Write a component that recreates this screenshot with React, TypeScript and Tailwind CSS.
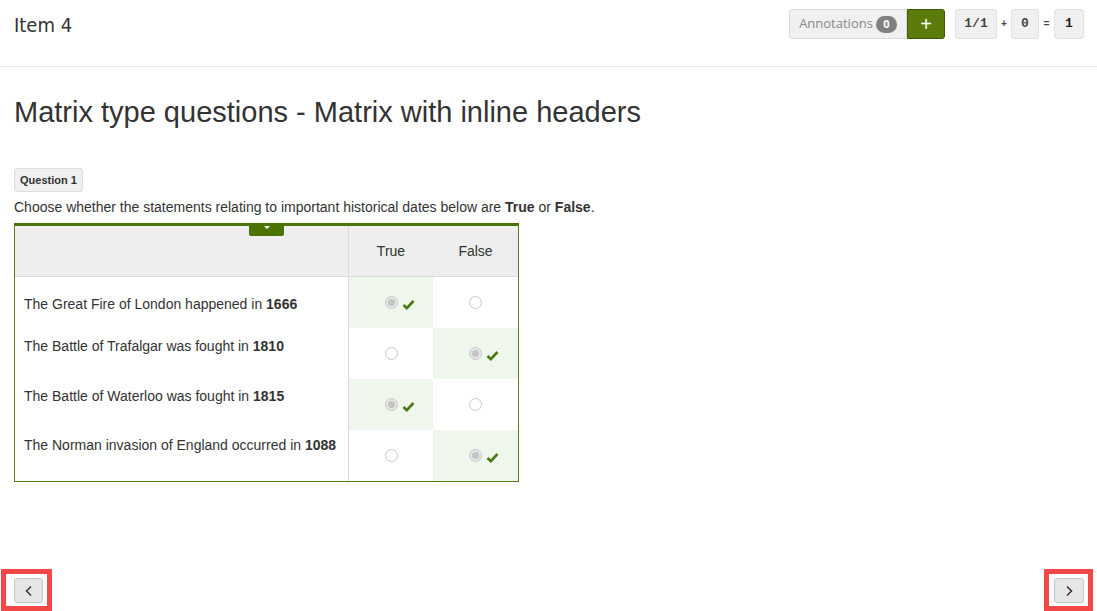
import React from "react";

const rows = [
  { text: "The Great Fire of London happened in ", year: "1666", answer: 0, pt: "pt-[17px]" },
  { text: "The Battle of Trafalgar was fought in ", year: "1810", answer: 1, pt: "pt-[8px]" },
  { text: "The Battle of Waterloo was fought in ", year: "1815", answer: 0, pt: "pt-[7px]" },
  { text: "The Norman invasion of England occurred in ", year: "1088", answer: 1, pt: "pt-[5px]" },
];

function Check() {
  return (
    <svg width="13" height="11" viewBox="0 0 13 11" className="absolute left-[11px] top-[0px]">
      <path d="M1.5 6 L4.8 9.2 L11.5 2" fill="none" stroke="#4a7a12" strokeWidth="2.6" />
    </svg>
  );
}

function Radio({ checked }: { checked: boolean }) {
  return (
    <span className="relative inline-block w-[13px] h-[13px]">
      <span
        className={
          "block w-[13px] h-[13px] rounded-full border border-[#c8c8c8] " +
          (checked ? "bg-[#e6e6e6]" : "bg-white")
        }
      >
        {checked && <span className="block w-[7px] h-[7px] rounded-full bg-[#c4c4c4] m-[2px]" />}
      </span>
      {checked && (
        <span className="absolute left-[6px] top-[3px]">
          <Check />
        </span>
      )}
    </span>
  );
}

export default function App() {
  return (
    <div className="w-[1097px] h-[611px] bg-white relative overflow-hidden" style={{ fontFamily: "'Liberation Sans', Arial, sans-serif" }}>
      <div className="h-[67px] border-b border-[#e6e6e6] flex items-start justify-between pl-[14px] pr-[13px]">
        <div className="pt-[10px] text-[20px] text-[#333] font-['DejaVu_Sans_Condensed',sans-serif]">Item 4</div>
        <div className="flex items-center pt-[9px]">
          <div className="flex h-[30px]">
            <div className="w-[118px] flex items-center justify-center gap-[3px] bg-[#f0f0f0] border border-[#d9d9d9] rounded-l-[3px] text-[#888] text-[13px] font-['Open_Sans',sans-serif]">
              Annotations
              <span className="inline-flex items-center justify-center w-[21px] h-[17px] rounded-full bg-[#808080] text-white text-[11px] font-bold">0</span>
            </div>
            <div className="w-[38px] flex items-center justify-center bg-[#5b7c0b] border border-[#3f5a05] rounded-r-[3px] text-white text-[20px] leading-none">+</div>
          </div>
          <div className="ml-[10px] flex items-center font-['Liberation_Mono',monospace] text-[13px] font-bold text-[#444]">
            <span className="w-[42px] h-[30px] flex items-center justify-center bg-[#f0f0f0] border border-[#e2e2e2] rounded-[3px]">1/1</span>
            <span className="w-[14px] text-center text-[10px]">+</span>
            <span className="w-[28px] h-[30px] flex items-center justify-center bg-[#f0f0f0] border border-[#e2e2e2] rounded-[3px]">0</span>
            <span className="w-[15px] text-center text-[10px]">=</span>
            <span className="w-[30px] h-[30px] flex items-center justify-center bg-[#f0f0f0] border border-[#e2e2e2] rounded-[3px] text-[#222]">1</span>
          </div>
        </div>
      </div>

      <div className="px-[14px]">
        <h1 className="mt-[29px] text-[29px] text-[#333] leading-[33px]">Matrix type questions - Matrix with inline headers</h1>

        <div className="mt-[39px] inline-block px-[5px] h-[24px] leading-[22px] bg-[#f0f0f0] border border-[#ddd] rounded-[3px] text-[11px] font-bold text-[#333]">
          Question 1
        </div>
        <p className="mt-[7px] text-[14px] text-[#333] leading-[16px]">
          Choose whether the statements relating to important historical dates below are <b>True</b> or <b>False</b>.
        </p>

        <div className="mt-[8px] w-[505px] border-x border-b border-[#577d1b] border-t-[3px] border-t-[#4a7300]">
          <div className="flex h-[51px] bg-[#eeeeee] border-b border-[#dadada] relative">
            <div className="absolute left-[234px] top-0 w-[35px] h-[10px] bg-[#4a7300] rounded-b-[2px] flex justify-center">
              <span className="block w-0 h-0 border-x-[3px] border-x-transparent border-t-[3px] border-t-white" />
            </div>
            <div className="w-[334px] border-r border-[#dadada]" />
            <div className="w-[84px] flex items-center justify-center text-[14px] text-[#333]">True</div>
            <div className="flex-1 flex items-center justify-center text-[14px] text-[#333]">False</div>
          </div>
          {rows.map((r, i) => (
            <div key={i} className="flex h-[51px]">
              <div className={"w-[334px] border-r border-[#dadada] pl-[9px] text-[14px] text-[#333] " + r.pt}>
                {r.text}
                <b>{r.year}</b>
              </div>
              {[0, 1].map((c) => (
                <div
                  key={c}
                  className={
                    (c === 0 ? "w-[84px] " : "flex-1 ") +
                    "flex items-center justify-center " +
                    (r.answer === c ? "bg-[#eff6ec]" : "bg-white")
                  }
                >
                  <Radio checked={r.answer === c} />
                </div>
              ))}
            </div>
          ))}
        </div>
      </div>

      <div className="absolute left-[1px] bottom-0 w-[51px] h-[42px] border-[5px] border-[#f44848] pl-[8px] pt-[4px]">
        <div className="w-[29px] h-[25px] bg-[#e6e6e6] border border-[#c6c6c6] rounded-[3px] flex items-center justify-center">
          <svg width="10" height="12" viewBox="0 0 10 12"><path d="M7 1.5 L2.5 6 L7 10.5" fill="none" stroke="#333" strokeWidth="1.5" /></svg>
        </div>
      </div>
      <div className="absolute right-[4px] bottom-0 w-[49px] h-[42px] border-[5px] border-[#f44848] pl-[5px] pt-[4px]">
        <div className="w-[30px] h-[25px] bg-[#e6e6e6] border border-[#c6c6c6] rounded-[3px] flex items-center justify-center">
          <svg width="10" height="12" viewBox="0 0 10 12"><path d="M3 1.5 L7.5 6 L3 10.5" fill="none" stroke="#333" strokeWidth="1.5" /></svg>
        </div>
      </div>
    </div>
  );
}
